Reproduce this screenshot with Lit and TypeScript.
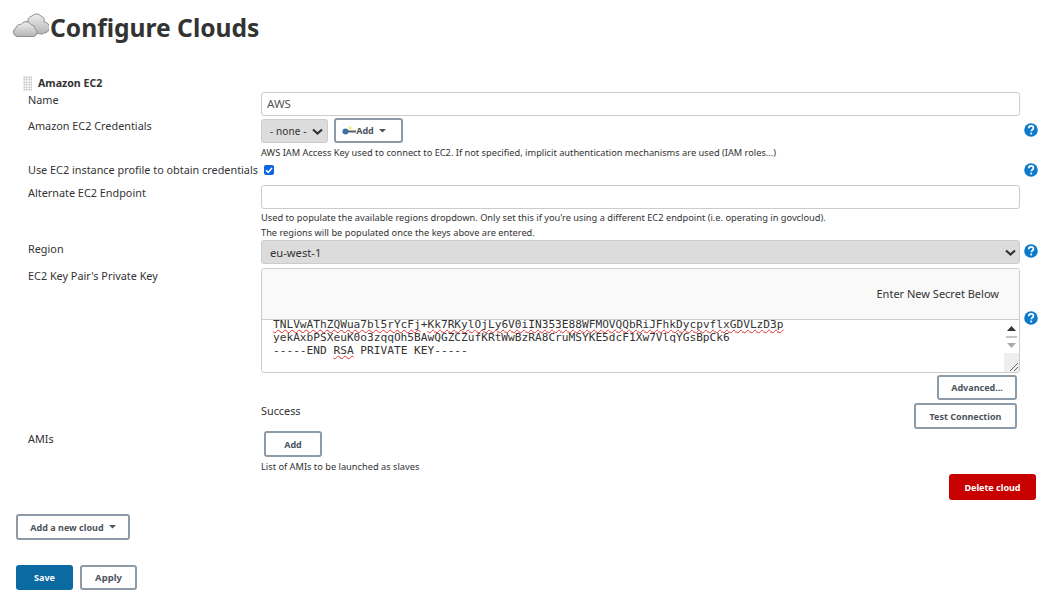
import { html, css, LitElement, svg } from 'lit';
import { customElement } from 'lit/decorators.js';

const helpIcon = html`<svg class="help" width="14" height="14" viewBox="0 0 14 14">
  <circle cx="7" cy="7" r="6.8" fill="#0b7ac8"></circle>
  <path d="M4.7 5.2c.1-1.5 1.1-2.3 2.4-2.3 1.4 0 2.3.8 2.3 2 0 1-.6 1.5-1.2 1.9-.5.4-.8.6-.8 1.3v.2" fill="none" stroke="#fff" stroke-width="1.7"></path>
  <rect x="6.3" y="9.6" width="1.8" height="1.8" fill="#fff"></rect>
</svg>`;

const caret = html`<svg class="caret" width="7" height="4" viewBox="0 0 7 4"><path d="M0 0h7L3.5 3.5z" fill="currentColor"></path></svg>`;

const chevron = svg`<path d="M1 1.5l4.5 4 4.5-4" fill="none" stroke="#333" stroke-width="2.2"></path>`;

@customElement('app-root')
export class AppRoot extends LitElement {
  static override styles = css`
    :host {
      display: block;
      width: 1044px;
      height: 603px;
      overflow: hidden;
      background: #fff;
      color: #333;
      font-family: 'Noto Sans', 'Open Sans', sans-serif;
      font-size: 11px;
      box-sizing: border-box;
    }
    .title {
      display: flex;
      align-items: center;
      height: 33px;
      margin: 11px 0 0 12px;
      gap: 1px;
    }
    .title h1 {
      margin: 0;
      font-size: 24.6px;
      font-weight: 700;
      color: #333;
      line-height: 33px;
    }
    .section {
      display: flex;
      align-items: center;
      height: 16px;
      margin: 31px 0 0 23px;
      gap: 6px;
      font-weight: 700;
      font-size: 10.6px;
    }
    .handle {
      width: 9px;
      height: 15px;
      background-image: radial-gradient(#bbb 0.8px, transparent 0.9px);
      background-size: 2.5px 2.5px;
    }
    .form {
      display: grid;
      grid-template-columns: 233px 759px 24px;
      margin-left: 28px;
      align-items: start;
    }
    .mt0 { margin-top: 0; }
    .mt1 { margin-top: 1px; }
    .mt2 { margin-top: 2px; }
    .mt3 { margin-top: 3px; }
    .mt4 { margin-top: 4px; }
    .mt7 { margin-top: 7px; }
    .mt8 { margin-top: 8px; }
    .mt47 { margin-top: 47px; }
    .label {
      font-size: 10.85px;
      line-height: 15px;
      white-space: nowrap;
    }
    .cell-help {
      display: flex;
      padding-left: 4px;
    }
    .input {
      box-sizing: border-box;
      height: 24px;
      width: 100%;
      border: 1px solid #ccc;
      border-radius: 3px;
      padding: 0 5px;
      line-height: 22px;
      font-size: 11.5px;
      color: #555;
      background: #fff;
    }
    .select {
      box-sizing: border-box;
      height: 24px;
      display: flex;
      align-items: center;
      justify-content: space-between;
      background: #dcdcdc;
      border: 1px solid #ccc;
      border-radius: 3px;
      padding: 0 3px 0 8px;
      font-size: 11.2px;
      color: #333;
    }
    .select svg {
      margin-top: 1px;
    }
    .select-none {
      width: 67px;
      font-size: 10px;
      padding-right: 4px;
      letter-spacing: 0.1px;
    }
    .creds {
      display: flex;
      align-items: center;
      gap: 6px;
    }
    .note {
      font-size: 9.25px;
      line-height: 15px;
      color: #333;
      white-space: nowrap;
    }
    .btn {
      box-sizing: border-box;
      display: inline-flex;
      align-items: center;
      justify-content: center;
      gap: 5px;
      height: 26px;
      background: #fff;
      border: 2px solid #8d9ba8;
      border-radius: 3px;
      font-family: inherit;
      font-size: 9px;
      font-weight: 700;
      color: #4d545d;
      padding: 0;
    }
    .btn .caret {
      color: #4d545d;
    }
    .btn-add-key {
      width: 69px;
      height: 25px;
      gap: 0;
      padding-right: 9px;
    }
    .btn-add-key .caret {
      margin-left: 5px;
    }
    .btn-advanced {
      width: 80px;
      height: 25px;
    }
    .btn-test {
      width: 103px;
    }
    .btn-add {
      width: 58px;
      margin-left: 3px;
    }
    .check {
      display: flex;
      align-items: center;
      height: 15px;
    }
    .checkbox {
      box-sizing: border-box;
      width: 10px;
      height: 10px;
      margin-left: 3px;
      background: #0b66e4;
      border-radius: 2px;
      display: flex;
    }
    .secret {
      box-sizing: border-box;
      height: 105px;
      border: 1px solid #ccc;
      border-radius: 3px;
      display: flex;
      flex-direction: column;
      overflow: hidden;
    }
    .secret-head {
      height: 49px;
      padding: 0 20px 1px 0;
      background: #f9f9f9;
      border-bottom: 1px solid #ccc;
      box-sizing: content-box;
      flex: none;
      display: flex;
      align-items: center;
      justify-content: flex-end;
      font-size: 11px;
      color: #333;
      position: relative;
      z-index: 1;
    }
    .secret-body {
      flex: 1;
      display: flex;
      min-height: 0;
    }
    .secret-text {
      flex: 1;
      font-family: 'DejaVu Sans Mono', monospace;
      font-size: 11.17px;
      line-height: 13px;
      color: #333;
      padding: 0 0 0 11px;
      margin: -2px 0 0;
      white-space: pre;
      overflow: hidden;
    }
    .spell {
      text-decoration: underline wavy #e03030 1px;
      text-decoration-skip-ink: none;
    }
    .scroll {
      width: 15px;
      display: flex;
      flex-direction: column;
      align-items: center;
      background: #fff;
      padding-top: 6px;
      box-sizing: border-box;
      position: relative;
    }
    .thumb {
      width: 11px;
      height: 2px;
      background: #c4c4c4;
      margin: 5px 0 5px;
    }
    .grip {
      position: absolute;
      left: 0;
      right: 0;
      bottom: 0;
      height: 19px;
      background: #eee;
      display: flex;
      align-items: flex-end;
    }
    .right {
      display: flex;
      justify-content: flex-end;
      padding-right: 3px;
    }
    .test-row {
      justify-content: space-between;
      align-items: flex-start;
    }
    .success {
      line-height: 15px;
      font-size: 10.85px;
    }
    .delete {
      box-sizing: border-box;
      display: flex;
      align-items: center;
      justify-content: center;
      width: 87px;
      height: 26px;
      background: #c90000;
      border-radius: 3px;
      color: #fff;
      font-size: 9px;
      font-weight: 700;
      margin: 0 0 0 949px;
    }
    .btn-cloud {
      width: 114px;
      margin: 14px 0 0 16px;
      display: flex;
    }
    .footer {
      display: flex;
      gap: 7px;
      margin: 25px 0 0 16px;
    }
    .save {
      box-sizing: border-box;
      width: 57px;
      height: 25px;
      background: #0b6aa2;
      border-radius: 3px;
      color: #fff;
      font-size: 9px;
      font-weight: 700;
      display: flex;
      align-items: center;
      justify-content: center;
    }
    .apply {
      width: 57px;
      height: 25px;
      font-size: 9.5px;
    }
  `;

  override render() {
    return html`
      <div class="title">
        <svg width="37" height="33" viewBox="0 0 37 33">
          <defs>
            <linearGradient id="c" x1="0" y1="0" x2="0" y2="1">
              <stop offset="0" stop-color="#efefef"></stop>
              <stop offset="1" stop-color="#b4b4b4"></stop>
            </linearGradient>
          </defs>
          <path d="M13 21a5 5 0 0 1 3-10a5.500 5.500 0 0 1 4-6a6 6 0 0 1 9 0a5 5 0 0 1 3 6a5 5 0 0 1 0 11a3 3 0 0 1-3 1z" fill="url(#c)" stroke="#8f8f8f" stroke-width="1"></path>
          <path d="M5 25.500a4.500 4.500 0 0 1-1-8.500a4 4 0 0 1 5-3.500a6 6 0 0 1 10 0a4.500 4.500 0 0 1 4 4a4.500 4.500 0 0 1-1 8z" fill="url(#c)" stroke="#8f8f8f" stroke-width="1"></path>
        </svg>
        <h1>Configure Clouds</h1>
      </div>

      <div class="section"><span class="handle"></span>Amazon EC2</div>

      <div class="form">
        <div class="label mt1">Name</div>
        <div class="input mt1">AWS</div>
        <div></div>

        <div class="label mt2">Amazon EC2 Credentials</div>
        <div class="creds mt2">
          <div class="select select-none">- none -
            <svg width="11" height="7" viewBox="0 0 11 7">${chevron}</svg>
          </div>
          <button class="btn btn-add-key">
            <svg width="14" height="10" viewBox="0 0 14 10">
              <circle cx="3.500" cy="5.500" r="3" fill="#3f6ea8"></circle>
              <rect x="5" y="4.500" width="9" height="2" fill="#56606a"></rect>
              <circle cx="8" cy="2" r="1.800" fill="#f5ee8c"></circle>
            </svg>Add ${caret}
          </button>
        </div>
        <div class="cell-help mt7">${helpIcon}</div>

        <div></div>
        <div class="note mt2">AWS IAM Access Key used to connect to EC2. If not specified, implicit authentication mechanisms are used (IAM roles...)</div>
        <div></div>

        <div class="label mt2">Use EC2 instance profile to obtain credentials</div>
        <div class="check mt2">
          <div class="checkbox">
            <svg width="10" height="10" viewBox="0 0 10 10"><path d="M2 5.200l2.200 2.200L8 3" fill="none" stroke="#fff" stroke-width="1.600"></path></svg>
          </div>
        </div>
        <div class="cell-help mt3">${helpIcon}</div>

        <div class="label mt8">Alternate EC2 Endpoint</div>
        <div class="input mt8"></div>
        <div></div>

        <div></div>
        <div class="note mt1">Used to populate the available regions dropdown. Only set this if you're using a different EC2 endpoint (i.e. operating in govcloud).<br />The regions will be populated once the keys above are entered.</div>
        <div></div>

        <div class="label mt1">Region</div>
        <div class="select mt0">eu-west-1
          <svg width="11" height="7" viewBox="0 0 11 7">${chevron}</svg>
        </div>
        <div class="cell-help mt4">${helpIcon}</div>

        <div class="label mt4">EC2 Key Pair's Private Key</div>
        <div class="secret mt4">
          <div class="secret-head">Enter New Secret Below</div>
          <div class="secret-body">
            <pre class="secret-text"><span class="spell">TNLVwAThZQWua7bl5rYcFj</span>+<span class="spell">Kk7RKylOjLy6V0iIN353E88WFMOVQQbRiJFhkDycpvflxGDVLzD3p</span>
<span>yekAxbPSXeuK0o3zqqOh5BAwQGZCZufKRtWwBzRA8CruMSYKE5dcF1Xw7VlqYGsBpCk6</span>
-----END <span class="spell">RSA</span> PRIVATE KEY-----</pre>
            <div class="scroll">
              <svg width="9" height="5" viewBox="0 0 9 5"><path d="M0 5h9L4.500 0z" fill="#333"></path></svg>
              <div class="thumb"></div>
              <svg width="9" height="5" viewBox="0 0 9 5"><path d="M0 0h9L4.500 5z" fill="#aaa"></path></svg>
              <div class="grip">
                <svg width="15" height="15" viewBox="0 0 15 15"><path d="M14 6l-8 8M14 10l-4 4" stroke="#666" stroke-width="1"></path></svg>
              </div>
            </div>
          </div>
        </div>
        <div class="cell-help mt47">${helpIcon}</div>

        <div></div>
        <div class="right mt2">
          <button class="btn btn-advanced">Advanced...</button>
        </div>
        <div></div>

        <div></div>
        <div class="right test-row mt3">
          <div class="success">Success</div>
          <button class="btn btn-test">Test Connection</button>
        </div>
        <div></div>

        <div class="label mt2">AMIs</div>
        <div class="mt2">
          <button class="btn btn-add">Add</button>
        </div>
        <div></div>

        <div></div>
        <div class="note mt2">List of AMIs to be launched as slaves</div>
        <div></div>
      </div>

      <div class="delete">Delete cloud</div>

      <button class="btn btn-cloud">Add a new cloud ${caret}</button>

      <div class="footer">
        <div class="save">Save</div>
        <button class="btn apply">Apply</button>
      </div>
    `;
  }
}
